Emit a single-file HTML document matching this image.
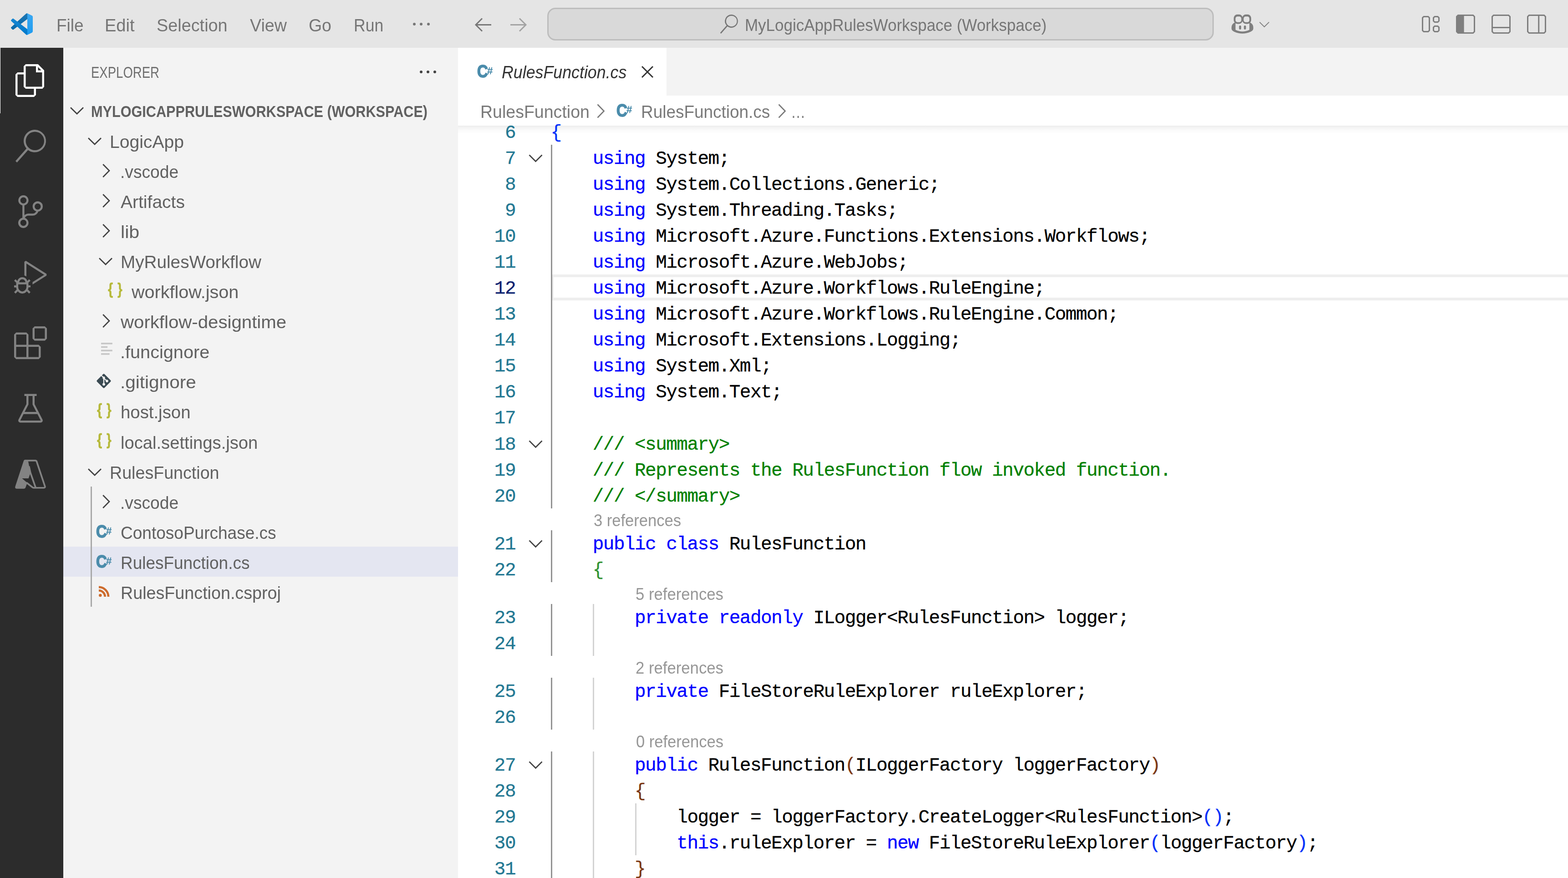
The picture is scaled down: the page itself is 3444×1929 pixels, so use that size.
<!DOCTYPE html>
<html lang="en"><head><meta charset="utf-8"><title>RulesFunction.cs - MyLogicAppRulesWorkspace (Workspace)</title><style>
html,body{margin:0;padding:0;width:3444px;height:1929px}
body{width:3444px;height:1929px;overflow:hidden;position:relative;background:#fff;font-family:'Liberation Sans', sans-serif}
#app{position:absolute;left:0;top:0;width:3444px;height:1929px;overflow:hidden}
.t{position:absolute;line-height:1;white-space:pre;transform-origin:0 0;font-family:'Liberation Sans', sans-serif}
.c{position:absolute;line-height:1;white-space:pre;font-family:'Liberation Mono', monospace;font-size:41px;letter-spacing:-1.5240px;color:#000;-webkit-text-stroke:0.3px currentColor}
svg{overflow:visible}
</style></head><body><div id="app">
<div style="position:absolute;left:0px;top:0px;width:3444px;height:105px;background:#e5e5e5;"></div>
<div style="position:absolute;left:0px;top:105px;width:139px;height:1824px;background:#2c2c2c;"></div>
<div style="position:absolute;left:0px;top:105px;width:1px;height:144px;background:#ffffff;"></div>
<div style="position:absolute;left:139px;top:105px;width:867px;height:1824px;background:#f3f3f3;"></div>
<div style="position:absolute;left:1006px;top:105px;width:2438px;height:1824px;background:#ffffff;"></div>
<div style="position:absolute;left:1006px;top:105px;width:2438px;height:105px;background:#f3f3f3;"></div>
<div style="position:absolute;left:1006px;top:105px;width:458px;height:105px;background:#ffffff;"></div>
<div style="position:absolute;left:1006px;top:276px;width:2438px;height:18px;background:linear-gradient(to bottom, rgba(0,0,0,0.07), rgba(0,0,0,0.045) 25%, rgba(0,0,0,0.02) 55%, rgba(0,0,0,0));"></div>
<svg style="position:absolute;left:24px;top:29px" width="48" height="48" viewBox="0 0 100 100" ><defs><mask id="vm" maskUnits="userSpaceOnUse" x="0" y="0" width="100" height="100"><path fill-rule="evenodd" clip-rule="evenodd" d="M70.9119 99.3171C72.4869 99.9307 74.2828 99.8914 75.8725 99.1264L96.4608 89.2197C98.6242 88.1787 100 85.9892 100 83.5872V16.4133C100 14.0113 98.6243 11.8218 96.4609 10.7808L75.8725 0.873756C73.7862 -0.130129 71.3446 0.11576 69.5135 1.44695C69.252 1.63711 69.0028 1.84943 68.769 2.08341L29.3551 38.0415L12.1872 25.0096C10.589 23.7965 8.35363 23.8959 6.86933 25.2461L1.36303 30.2549C-0.452552 31.9064 -0.454633 34.7627 1.35853 36.417L16.2471 50.0001L1.35853 63.5832C-0.454633 65.2374 -0.452552 68.0938 1.36303 69.7453L6.86933 74.7541C8.35363 76.1043 10.589 76.2037 12.1872 74.9905L29.3551 61.9587L68.769 97.9167C69.3925 98.5406 70.1246 99.0104 70.9119 99.3171ZM75.0152 27.2989L45.1091 50.0001L75.0152 72.7012V27.2989Z" fill="white"/></mask>
<linearGradient id="vg" x1="50" y1="0" x2="50" y2="100" gradientUnits="userSpaceOnUse"><stop stop-color="#fff" stop-opacity="0.12"/><stop offset="1" stop-color="#fff" stop-opacity="0"/></linearGradient></defs>
<g mask="url(#vm)"><path d="M96.4614 10.7962L75.8569 0.875542C73.4719 -0.272773 70.6217 0.211611 68.75 2.08333L1.29858 63.5832C-0.515693 65.2373 -0.513607 68.0937 1.30308 69.7452L6.81272 74.754C8.29793 76.1042 10.5347 76.2036 12.1338 74.9905L93.3609 13.3699C96.086 11.3026 100 13.2462 100 16.6667V16.4275C100 14.0265 98.6246 11.8378 96.4614 10.7962Z" fill="#0065A9"/>
<path d="M96.4614 89.2038L75.8569 99.1245C73.4719 100.273 70.6217 99.7884 68.75 97.9167L1.29858 36.4169C-0.515693 34.7627 -0.513607 31.9063 1.30308 30.2548L6.81272 25.246C8.29793 23.8958 10.5347 23.7964 12.1338 25.0095L93.3609 86.6301C96.086 88.6974 100 86.7538 100 83.3334V83.5726C100 85.9735 98.6246 88.1622 96.4614 89.2038Z" fill="#007ACC"/>
<path d="M75.8578 99.1263C73.4721 100.274 70.6219 99.7885 68.75 97.9166C71.0564 100.223 75 98.5895 75 95.3278V4.67213C75 1.41039 71.0564 -0.223106 68.75 2.08329C70.6219 0.211402 73.4721 -0.273666 75.8578 0.873633L96.4587 10.7807C98.6234 11.8217 100 14.0112 100 16.4132V83.5871C100 85.9891 98.6234 88.1786 96.4586 89.2196L75.8578 99.1263Z" fill="#1F9CF0"/>
<path fill-rule="evenodd" clip-rule="evenodd" d="M70.8511 99.3171C72.4261 99.9306 74.2221 99.8913 75.8117 99.1264L96.4 89.2197C98.5634 88.1787 99.9392 85.9892 99.9392 83.5871V16.4133C99.9392 14.0112 98.5635 11.8217 96.4001 10.7807L75.8117 0.873695C73.7255 -0.13019 71.2838 0.115699 69.4527 1.44688C69.1912 1.63705 68.942 1.84937 68.7082 2.08335L29.2943 38.0414L12.1264 25.0096C10.5283 23.7964 8.29285 23.8959 6.80855 25.246L1.30225 30.2548C-0.513334 31.9064 -0.515415 34.7627 1.29775 36.4169L16.1863 50L1.29775 63.5832C-0.515415 65.2374 -0.513334 68.0937 1.30225 69.7452L6.80855 74.754C8.29285 76.1042 10.5283 76.2036 12.1264 74.9905L29.2943 61.9586L68.7082 97.9167C69.3317 98.5405 70.0638 99.0104 70.8511 99.3171ZM74.9544 27.2989L45.0483 50L74.9544 72.7012V27.2989Z" fill="url(#vg)"/></g></svg>
<div class="t" style="left:123.66px;top:35.50px;font-size:39px;color:#767676;transform:scaleX(0.9483)">File</div>
<div class="t" style="left:230.07px;top:35.50px;font-size:39px;color:#767676;transform:scaleX(0.9750)">Edit</div>
<div class="t" style="left:343.56px;top:35.50px;font-size:39px;color:#767676;transform:scaleX(0.9699)">Selection</div>
<div class="t" style="left:549.00px;top:35.50px;font-size:39px;color:#767676;transform:scaleX(0.9643)">View</div>
<div class="t" style="left:678.08px;top:35.50px;font-size:39px;color:#767676;transform:scaleX(0.9592)">Go</div>
<div class="t" style="left:777.47px;top:35.50px;font-size:39px;color:#767676;transform:scaleX(0.9106)">Run</div>
<div style="position:absolute;left:906.5px;top:50px;width:6px;height:6px;border-radius:50%;background:#767676"></div>
<div style="position:absolute;left:922px;top:50px;width:6px;height:6px;border-radius:50%;background:#767676"></div>
<div style="position:absolute;left:937.5px;top:50px;width:6px;height:6px;border-radius:50%;background:#767676"></div>
<svg style="position:absolute;left:1043px;top:38.5px" width="36" height="31" viewBox="0 0 36 31"><path d="M16 1.5 L2 15.5 L16 29.5 M2.5 15.5 H36" fill="none" stroke="#777777" stroke-width="3" stroke-linejoin="miter"/></svg>
<svg style="position:absolute;left:1121px;top:38.5px" width="36" height="31" viewBox="0 0 36 31"><path d="M20 1.5 L34 15.5 L20 29.5 M33.5 15.5 H0" fill="none" stroke="#a3a3a3" stroke-width="3" stroke-linejoin="miter"/></svg>
<div style="position:absolute;left:1202px;top:17px;width:1464px;height:72px;box-sizing:border-box;border:3px solid #bdbdbd;border-radius:18px;background:#d9d9d9"></div>
<svg style="position:absolute;left:1579.5px;top:32.2px" width="42" height="42" viewBox="0 0 24 24" fill="#767676" ><path d="M15.25 0a8.25 8.25 0 0 0-6.18 13.72L1 22.88l1.12 1.12 8.05-9.12A8.251 8.251 0 1 0 15.25.01V0zm0 15a6.75 6.75 0 1 1 0-13.5 6.75 6.75 0 0 1 0 13.5z"/></svg>
<div class="t" style="left:1635.99px;top:37.70px;font-size:36px;color:#767676;transform:scaleX(0.9706)">MyLogicAppRulesWorkspace (Workspace)</div>
<svg style="position:absolute;left:2690px;top:20px" width="110" height="65" viewBox="0 0 110 65"><path d="M21 30 C16.5 32.5 14.9 36.5 14.9 41.5 C14.9 45.5 16.5 47.3 20 49.2 C27 52.6 33 53.8 38.9 53.8 C44.7 53.8 50.7 52.6 57.7 49.2 C61.2 47.3 62.8 45.5 62.8 41.5 C62.8 36.5 61.2 32.5 56.7 30 Z" fill="#7f7f7f"/><path d="M23.7 26 H54.2 V45.4 C49 47.9 44 49.2 38.9 49.2 C33.9 49.2 28.9 47.9 23.7 45.4 Z" fill="#e5e5e5"/><rect x="19.8" y="11.8" width="19.6" height="20.7" rx="7.8" ry="8.2" fill="#7f7f7f"/><rect x="38.5" y="11.8" width="19.6" height="20.7" rx="7.8" ry="8.2" fill="#7f7f7f"/><rect x="23.7" y="16.2" width="12.7" height="12.6" rx="4.6" fill="#e5e5e5"/><rect x="41.6" y="16.2" width="12.6" height="12.6" rx="4.6" fill="#e5e5e5"/><rect x="31.5" y="36" width="4.6" height="8.9" rx="2.3" fill="#7f7f7f"/><rect x="42.1" y="36" width="4.6" height="8.9" rx="2.3" fill="#7f7f7f"/><path d="M76.6 28.6 L87 39 L97.4 28.6" fill="none" stroke="#7f7f7f" stroke-width="1.8"/></svg>
<svg style="position:absolute;left:3121px;top:30px" width="280" height="46" viewBox="3121 30 280 46"><g fill="none" stroke="#7f7f7f" stroke-width="3" stroke-linejoin="miter"><path d="M3127.1 36.5 H3136.9 L3139.5 39.1 V66.9 L3136.9 69.5 H3127.1 L3124.5 66.9 V39.1 Z"/><path d="M3151.1 36.5 H3157.9 L3160.5 39.1 V45.9 L3157.9 48.5 H3151.1 L3148.5 45.9 V39.1 Z"/><path d="M3151.1 57.5 H3157.9 L3160.5 60.1 V66.9 L3157.9 69.5 H3151.1 L3148.5 66.9 V60.1 Z"/><path d="M3202.5 33.5 H3235.5 L3238.5 36.5 V69.5 L3235.5 72.5 H3202.5 L3199.5 69.5 V36.5 Z"/><path d="M3280.5 33.5 H3313.5 L3316.5 36.5 V69.5 L3313.5 72.5 H3280.5 L3277.5 69.5 V36.5 Z"/><path d="M3277.5 60.5 H3316.5"/><path d="M3358.5 33.5 H3391.5 L3394.5 36.5 V69.5 L3391.5 72.5 H3358.5 L3355.5 69.5 V36.5 Z"/><path d="M3379.7 33.5 V72.5"/></g><path d="M3201 33.5 H3215.6 V72.5 H3201 L3198.5 70 V36 Z" fill="#7f7f7f"/></svg>
<svg style="position:absolute;left:31px;top:141px" width="72" height="72" viewBox="0 0 24 24" fill="#ffffff" ><path d="M17.5 0h-9L7 1.5V6H2.5L1 7.5v15.07L2.5 24h12.07L16 22.57V18h4.7l1.3-1.43V4.5L17.5 0zm0 2.12l2.38 2.38H17.5V2.12zm-3 20.38h-12v-15H7v9.07L8.5 18h6v4.5zm6-6h-12v-15H16V6h4.5v10.5z"/></svg>
<svg style="position:absolute;left:31px;top:285px" width="72" height="72" viewBox="0 0 24 24" fill="#838383" ><path d="M15.25 0a8.25 8.25 0 0 0-6.18 13.72L1 22.88l1.12 1.12 8.05-9.12A8.251 8.251 0 1 0 15.25.01V0zm0 15a6.75 6.75 0 1 1 0-13.5 6.75 6.75 0 0 1 0 13.5z"/></svg>
<svg style="position:absolute;left:31px;top:429px" width="72" height="72" viewBox="0 0 24 24" fill="#838383" ><path d="M21.007 8.222A3.738 3.738 0 0 0 15.045 5.2a3.737 3.737 0 0 0 1.156 6.583 2.988 2.988 0 0 1-2.668 1.67h-2.99a4.456 4.456 0 0 0-2.989 1.165V7.4a3.737 3.737 0 1 0-1.494 0v9.117a3.776 3.776 0 1 0 1.816.099 2.99 2.99 0 0 1 2.668-1.667h2.99a4.484 4.484 0 0 0 4.223-3.039 3.736 3.736 0 0 0 3.25-3.687zM4.565 3.738a2.242 2.242 0 1 1 4.484 0 2.242 2.242 0 0 1-4.484 0zm4.484 16.441a2.242 2.242 0 1 1-4.484 0 2.242 2.242 0 0 1 4.484 0zm8.221-9.715a2.242 2.242 0 1 1 0-4.485 2.242 2.242 0 0 1 0 4.485z"/></svg>
<svg style="position:absolute;left:31px;top:573px" width="72" height="72" viewBox="0 0 24 24" fill="#838383" ><path d="M10.94 13.5l-1.32 1.32a3.73 3.73 0 0 0-7.24 0L1.06 13.5 0 14.56l1.72 1.72-.22.22V18H0v1.5h1.5v.08c.077.489.214.966.41 1.42L0 22.94 1.06 24l1.65-1.65A4.308 4.308 0 0 0 6 24a4.31 4.31 0 0 0 3.29-1.65L10.94 24 12 22.94 10.09 21c.198-.464.336-.951.41-1.45v-.1H12V18h-1.5v-1.5l-.22-.22L12 14.56l-1.06-1.06zM6 13.5a2.25 2.25 0 0 1 2.25 2.25h-4.5A2.25 2.25 0 0 1 6 13.5zm3 6a3.33 3.33 0 0 1-3 3 3.33 3.33 0 0 1-3-3v-2.25h6v2.25zm14.76-9.9v1.26L13.5 17.37V15.6l8.5-5.37L9 2v9.46a5.07 5.07 0 0 0-1.5-.72V.63L8.64 0l15.12 9.6z"/></svg>
<svg style="position:absolute;left:31px;top:717px" width="72" height="72" viewBox="0 0 24 24" fill="#838383" ><path d="M13.5 1.5L15 0h7.5L24 1.5V9l-1.5 1.5H15L13.5 9V1.5zm1.5 0V9h7.5V1.5H15zM0 15V6l1.5-1.5H9L10.5 6v7.5H18l1.5 1.5v7.5L18 24H1.5L0 22.5V15zm9-1.5V6H1.5v7.5H9zM9 15H1.5v7.5H9V15zm1.5 7.5H18V15h-7.5v7.5z"/></svg>
<svg style="position:absolute;left:31px;top:861px" width="72" height="72" viewBox="0 0 16 16" fill="#838383" ><path d="M13.893 13.558L10 6.006v-4h1v-1H9.994V1l-.456.005H5V2h1v3.952l-3.894 7.609A1 1 0 0 0 3 15h10a1 1 0 0 0 .893-1.442zM7 6.194V2h2v4.194l.11.213L10.86 9.8H5.14l1.75-3.393.11-.213zM3 14l1.6-3.15h6.8L13 14H3z"/></svg>
<svg style="position:absolute;left:20px;top:995px" width="100" height="90" viewBox="0 0 100 90"><path d="M35.25 15.10 L41.30 15.10 L46.91 43.98 L42.67 56.02 L28.38 56.02 L39.93 65.63 L36.18 75.98 Q35.25 78.73 32.13 78.73 L16.97 78.73 Q12.16 78.73 13.60 73.61 L31.69 18.40 Q32.75 15.10 35.25 15.10 Z" fill="#838383"/><path d="M39.93 16.97 L57.70 16.97 Q59.89 16.97 60.64 19.34 L78.73 73.49 Q79.54 76.73 76.11 76.73 L54.27 76.73 Q52.71 76.73 51.15 75.48 L38.05 65.19" fill="none" stroke="#838383" stroke-width="3.7" stroke-linejoin="round"/><path d="M43.67 29.32 L46.91 43.98 L58.33 76.42" fill="none" stroke="#838383" stroke-width="3.7" stroke-linejoin="round"/></svg>
<div class="t" style="left:200.01px;top:142.40px;font-size:34.5px;color:#6f6f6f;transform:scaleX(0.7978)">EXPLORER</div>
<div style="position:absolute;left:922px;top:154.5px;width:6px;height:6px;border-radius:50%;background:#424242"></div>
<div style="position:absolute;left:937px;top:154.5px;width:6px;height:6px;border-radius:50%;background:#424242"></div>
<div style="position:absolute;left:952px;top:154.5px;width:6px;height:6px;border-radius:50%;background:#424242"></div>
<svg style="position:absolute;left:144.5px;top:218.4px" width="48" height="48" viewBox="0 0 48 48"><path d="M10 18.2 L24 32 L38 18.2" fill="none" stroke="#424242" stroke-width="2.7"/></svg>
<div class="t" style="left:200.05px;top:227.00px;font-size:35px;color:#616161;transform:scaleX(0.8751);font-weight:700">MYLOGICAPPRULESWORKSPACE (WORKSPACE)</div>
<div style="position:absolute;left:139px;top:1201px;width:867px;height:66px;background:#e4e6f1;"></div>
<div style="position:absolute;left:199px;top:1069px;width:3px;height:264px;background:#a9a9a9;"></div>
<svg style="position:absolute;left:183.6px;top:284.8px" width="48" height="48" viewBox="0 0 48 48"><path d="M10 18.2 L24 32 L38 18.2" fill="none" stroke="#424242" stroke-width="2.7"/></svg>
<div class="t" style="left:241.20px;top:291.80px;font-size:39px;color:#616161;transform:scaleX(1.0019)">LogicApp</div>
<svg style="position:absolute;left:207.6px;top:350.87px" width="48" height="48" viewBox="0 0 48 48"><path d="M18.2 10 L32 24 L18.2 38" fill="none" stroke="#424242" stroke-width="2.7"/></svg>
<div class="t" style="left:264.20px;top:357.87px;font-size:39px;color:#616161;transform:scaleX(0.9534)">.vscode</div>
<svg style="position:absolute;left:207.6px;top:416.94px" width="48" height="48" viewBox="0 0 48 48"><path d="M18.2 10 L32 24 L18.2 38" fill="none" stroke="#424242" stroke-width="2.7"/></svg>
<div class="t" style="left:265.20px;top:423.94px;font-size:39px;color:#616161;transform:scaleX(1.0007)">Artifacts</div>
<svg style="position:absolute;left:207.6px;top:483.01px" width="48" height="48" viewBox="0 0 48 48"><path d="M18.2 10 L32 24 L18.2 38" fill="none" stroke="#424242" stroke-width="2.7"/></svg>
<div class="t" style="left:265.20px;top:490.01px;font-size:39px;color:#616161;transform:scaleX(1.0579)">lib</div>
<svg style="position:absolute;left:207.6px;top:549.0799999999999px" width="48" height="48" viewBox="0 0 48 48"><path d="M10 18.2 L24 32 L38 18.2" fill="none" stroke="#424242" stroke-width="2.7"/></svg>
<div class="t" style="left:265.20px;top:556.08px;font-size:39px;color:#616161;transform:scaleX(0.9920)">MyRulesWorkflow</div>
<div class="t" style="left:236.80px;top:618.40px;font-size:40px;color:#b6b93a;font-weight:700;transform:scale(0.7267,0.8632);-webkit-text-stroke:0.6px currentColor">{</div>
<div class="t" style="left:257.50px;top:618.40px;font-size:40px;color:#b6b93a;font-weight:700;transform:scale(0.6812,0.8632);-webkit-text-stroke:0.6px currentColor">}</div>
<div class="t" style="left:289.20px;top:622.15px;font-size:39px;color:#616161;transform:scaleX(1.0143)">workflow.json</div>
<svg style="position:absolute;left:207.6px;top:681.22px" width="48" height="48" viewBox="0 0 48 48"><path d="M18.2 10 L32 24 L18.2 38" fill="none" stroke="#424242" stroke-width="2.7"/></svg>
<div class="t" style="left:265.20px;top:688.22px;font-size:39px;color:#616161;transform:scaleX(1.0307)">workflow-designtime</div>
<svg style="position:absolute;left:221.80px;top:752.99px" width="26" height="28" viewBox="0 0 26 28"><g fill="#c6c6c6"><rect x="0" y="0" width="24.8" height="3.5"/><rect x="0" y="7.7" width="14.1" height="3.5"/><rect x="0" y="15.4" width="24.8" height="3.5"/><rect x="0" y="23" width="18.6" height="3.5"/></g></svg>
<div class="t" style="left:264.20px;top:754.29px;font-size:39px;color:#616161;transform:scaleX(1.0168)">.funcignore</div>
<svg style="position:absolute;left:210.40px;top:818.56px" width="36" height="36" viewBox="-18 -18 36 36"><rect x="-11.7" y="-11.7" width="23.4" height="23.4" rx="2.2" transform="rotate(45)" fill="#3a4a52"/><g stroke="#f3f3f3" fill="none"><path d="M-5.9 -12.5 L0 -7" stroke-width="2.1"/><path d="M0 -7 V7.3" stroke-width="2.3"/><path d="M0.5 -5.8 L6.9 0.1" stroke-width="2.2"/></g><circle cx="0" cy="-7" r="2.7" fill="#f3f3f3"/><circle cx="0" cy="7.3" r="2.85" fill="#f3f3f3"/><circle cx="6.9" cy="0.1" r="2.85" fill="#f3f3f3"/></svg>
<div class="t" style="left:264.20px;top:820.36px;font-size:39px;color:#616161;transform:scaleX(1.0390)">.gitignore</div>
<div class="t" style="left:212.80px;top:882.68px;font-size:40px;color:#b6b93a;font-weight:700;transform:scale(0.7267,0.8632);-webkit-text-stroke:0.6px currentColor">{</div>
<div class="t" style="left:233.50px;top:882.68px;font-size:40px;color:#b6b93a;font-weight:700;transform:scale(0.6813,0.8632);-webkit-text-stroke:0.6px currentColor">}</div>
<div class="t" style="left:265.20px;top:886.43px;font-size:39px;color:#616161;transform:scaleX(0.9831)">host.json</div>
<div class="t" style="left:212.80px;top:948.75px;font-size:40px;color:#b6b93a;font-weight:700;transform:scale(0.7267,0.8632);-webkit-text-stroke:0.6px currentColor">{</div>
<div class="t" style="left:233.50px;top:948.75px;font-size:40px;color:#b6b93a;font-weight:700;transform:scale(0.6813,0.8632);-webkit-text-stroke:0.6px currentColor">}</div>
<div class="t" style="left:265.20px;top:952.50px;font-size:39px;color:#616161;transform:scaleX(0.9788)">local.settings.json</div>
<svg style="position:absolute;left:183.6px;top:1011.5699999999999px" width="48" height="48" viewBox="0 0 48 48"><path d="M10 18.2 L24 32 L38 18.2" fill="none" stroke="#424242" stroke-width="2.7"/></svg>
<div class="t" style="left:241.20px;top:1018.57px;font-size:39px;color:#616161;transform:scaleX(0.9648)">RulesFunction</div>
<svg style="position:absolute;left:207.6px;top:1077.6399999999999px" width="48" height="48" viewBox="0 0 48 48"><path d="M18.2 10 L32 24 L18.2 38" fill="none" stroke="#424242" stroke-width="2.7"/></svg>
<div class="t" style="left:264.20px;top:1084.64px;font-size:39px;color:#616161;transform:scaleX(0.9534)">.vscode</div>
<div class="t" style="left:211.13px;top:1148.08px;font-size:40px;color:#4b8cab;font-weight:700;transform:scale(0.8232,0.9850);-webkit-text-stroke:1.8px currentColor">C</div>
<div class="t" style="left:233.00px;top:1154.88px;font-size:40px;color:#4b8cab;font-weight:700;transform:scale(0.5545,0.5714);-webkit-text-stroke:0.5px currentColor">#</div>
<div class="t" style="left:265.20px;top:1150.71px;font-size:39px;color:#616161;transform:scaleX(0.9493)">ContosoPurchase.cs</div>
<div class="t" style="left:211.13px;top:1214.15px;font-size:40px;color:#4b8cab;font-weight:700;transform:scale(0.8232,0.9850);-webkit-text-stroke:1.8px currentColor">C</div>
<div class="t" style="left:233.00px;top:1220.95px;font-size:40px;color:#4b8cab;font-weight:700;transform:scale(0.5545,0.5714);-webkit-text-stroke:0.5px currentColor">#</div>
<div class="t" style="left:265.20px;top:1216.78px;font-size:39px;color:#616161;transform:scaleX(0.9473)">RulesFunction.cs</div>
<svg style="position:absolute;left:215.80px;top:1286.45px" width="26" height="26" viewBox="-1 -25 26 26"><circle cx="3.24" cy="-3.05" r="3.25" fill="#cd6b2c"/><path d="M0 -13.6 A13.6 13.6 0 0 1 13.6 0" fill="none" stroke="#cd6b2c" stroke-width="4.8"/><path d="M0 -21.05 A21.05 21.05 0 0 1 21.05 0" fill="none" stroke="#cd6b2c" stroke-width="4.7"/></svg>
<div class="t" style="left:265.20px;top:1282.85px;font-size:39px;color:#616161;transform:scaleX(0.9663)">RulesFunction.csproj</div>
<div class="t" style="left:1048.43px;top:137.27px;font-size:40px;color:#4b8cab;font-weight:700;transform:scale(0.8232,0.9850);-webkit-text-stroke:1.8px currentColor">C</div>
<div class="t" style="left:1070.30px;top:144.07px;font-size:40px;color:#4b8cab;font-weight:700;transform:scale(0.5545,0.5714);-webkit-text-stroke:0.5px currentColor">#</div>
<div class="t" style="left:1102.48px;top:139.00px;font-size:39px;color:#333333;transform:scaleX(0.9172);font-style:italic">RulesFunction.cs</div>
<svg style="position:absolute;left:1406px;top:142px" width="32" height="32" viewBox="0 0 32 32"><path d="M4 4 L28 28 M28 4 L4 28" fill="none" stroke="#333333" stroke-width="3"/></svg>
<div class="t" style="left:1054.61px;top:226.00px;font-size:39px;color:#7a7a7a;transform:scaleX(0.9623)">RulesFunction</div>
<svg style="position:absolute;left:1310px;top:228px" width="20" height="32" viewBox="0 0 20 32"><path d="M2.5 1.5 L16.5 16 L2.5 30.5" fill="none" stroke="#7a7a7a" stroke-width="2.7"/></svg>
<div class="t" style="left:1354.43px;top:222.57px;font-size:40px;color:#4b8cab;font-weight:700;transform:scale(0.8232,0.9850);-webkit-text-stroke:1.8px currentColor">C</div>
<div class="t" style="left:1376.30px;top:229.37px;font-size:40px;color:#4b8cab;font-weight:700;transform:scale(0.5545,0.5714);-webkit-text-stroke:0.5px currentColor">#</div>
<div class="t" style="left:1407.76px;top:226.00px;font-size:39px;color:#7a7a7a;transform:scaleX(0.9471)">RulesFunction.cs</div>
<svg style="position:absolute;left:1708px;top:228px" width="20" height="32" viewBox="0 0 20 32"><path d="M2.5 1.5 L16.5 16 L2.5 30.5" fill="none" stroke="#7a7a7a" stroke-width="2.7"/></svg>
<div class="t" style="left:1737.48px;top:226.00px;font-size:39px;color:#7a7a7a;transform:scaleX(0.8241)">…</div>
<div style="position:absolute;left:1210px;top:603px;width:2234px;height:57px;background:transparent;box-sizing:border-box;border:6px solid #eeeeee;border-right:0"></div>
<div style="position:absolute;left:1210px;top:318px;width:3px;height:799px;background:#939393;"></div>
<div style="position:absolute;left:1210px;top:1165px;width:3px;height:114px;background:#939393;"></div>
<div style="position:absolute;left:1210px;top:1327px;width:3px;height:114px;background:#939393;"></div>
<div style="position:absolute;left:1210px;top:1489px;width:3px;height:114px;background:#939393;"></div>
<div style="position:absolute;left:1210px;top:1651px;width:3px;height:278px;background:#939393;"></div>
<div style="position:absolute;left:1302px;top:1327px;width:3px;height:114px;background:#d3d3d3;"></div>
<div style="position:absolute;left:1302px;top:1489px;width:3px;height:114px;background:#d3d3d3;"></div>
<div style="position:absolute;left:1302px;top:1651px;width:3px;height:278px;background:#d3d3d3;"></div>
<div style="position:absolute;left:1395px;top:1765px;width:3px;height:114px;background:#d3d3d3;"></div>
<svg style="position:absolute;left:1160.3px;top:338.00px" width="33" height="20" viewBox="0 0 33 20"><path d="M2.5 2.5 L16.5 16.5 L30.5 2.5" fill="none" stroke="#424242" stroke-width="2.7"/></svg>
<svg style="position:absolute;left:1160.3px;top:966.00px" width="33" height="20" viewBox="0 0 33 20"><path d="M2.5 2.5 L16.5 16.5 L30.5 2.5" fill="none" stroke="#424242" stroke-width="2.7"/></svg>
<svg style="position:absolute;left:1160.3px;top:1185.00px" width="33" height="20" viewBox="0 0 33 20"><path d="M2.5 2.5 L16.5 16.5 L30.5 2.5" fill="none" stroke="#424242" stroke-width="2.7"/></svg>
<svg style="position:absolute;left:1160.3px;top:1671.00px" width="33" height="20" viewBox="0 0 33 20"><path d="M2.5 2.5 L16.5 16.5 L30.5 2.5" fill="none" stroke="#424242" stroke-width="2.7"/></svg>
<div class="t" style="left:1304.39px;top:1125.00px;font-size:37px;color:#979797;transform:scaleX(0.9333)">3 references</div>
<div class="t" style="left:1395.76px;top:1287.00px;font-size:37px;color:#979797;transform:scaleX(0.9379)">5 references</div>
<div class="t" style="left:1395.76px;top:1449.00px;font-size:37px;color:#979797;transform:scaleX(0.9379)">2 references</div>
<div class="t" style="left:1396.71px;top:1611.00px;font-size:37px;color:#979797;transform:scaleX(0.9333)">0 references</div>
<div class="c" style="left:1108.92px;top:272.00px;color:#237893">6</div>
<div class="c" style="left:1209.40px;top:272.00px"><span style="color:#0431fa">{</span></div>
<div class="c" style="left:1108.92px;top:329.00px;color:#237893">7</div>
<div class="c" style="left:1209.40px;top:329.00px">    <span style="color:#0000ff">using</span> System;</div>
<div class="c" style="left:1108.92px;top:386.00px;color:#237893">8</div>
<div class="c" style="left:1209.40px;top:386.00px">    <span style="color:#0000ff">using</span> System.Collections.Generic;</div>
<div class="c" style="left:1108.92px;top:443.00px;color:#237893">9</div>
<div class="c" style="left:1209.40px;top:443.00px">    <span style="color:#0000ff">using</span> System.Threading.Tasks;</div>
<div class="c" style="left:1085.84px;top:500.00px;color:#237893">10</div>
<div class="c" style="left:1209.40px;top:500.00px">    <span style="color:#0000ff">using</span> Microsoft.Azure.Functions.Extensions.Workflows;</div>
<div class="c" style="left:1085.84px;top:557.00px;color:#237893">11</div>
<div class="c" style="left:1209.40px;top:557.00px">    <span style="color:#0000ff">using</span> Microsoft.Azure.WebJobs;</div>
<div class="c" style="left:1085.84px;top:614.00px;color:#0b216f">12</div>
<div class="c" style="left:1209.40px;top:614.00px">    <span style="color:#0000ff">using</span> Microsoft.Azure.Workflows.RuleEngine;</div>
<div class="c" style="left:1085.84px;top:671.00px;color:#237893">13</div>
<div class="c" style="left:1209.40px;top:671.00px">    <span style="color:#0000ff">using</span> Microsoft.Azure.Workflows.RuleEngine.Common;</div>
<div class="c" style="left:1085.84px;top:728.00px;color:#237893">14</div>
<div class="c" style="left:1209.40px;top:728.00px">    <span style="color:#0000ff">using</span> Microsoft.Extensions.Logging;</div>
<div class="c" style="left:1085.84px;top:785.00px;color:#237893">15</div>
<div class="c" style="left:1209.40px;top:785.00px">    <span style="color:#0000ff">using</span> System.Xml;</div>
<div class="c" style="left:1085.84px;top:842.00px;color:#237893">16</div>
<div class="c" style="left:1209.40px;top:842.00px">    <span style="color:#0000ff">using</span> System.Text;</div>
<div class="c" style="left:1085.84px;top:899.00px;color:#237893">17</div>
<div class="c" style="left:1085.84px;top:957.00px;color:#237893">18</div>
<div class="c" style="left:1209.40px;top:957.00px">    <span style="color:#008000">/// &lt;summary&gt;</span></div>
<div class="c" style="left:1085.84px;top:1014.00px;color:#237893">19</div>
<div class="c" style="left:1209.40px;top:1014.00px">    <span style="color:#008000">/// Represents the RulesFunction flow invoked function.</span></div>
<div class="c" style="left:1085.84px;top:1071.00px;color:#237893">20</div>
<div class="c" style="left:1209.40px;top:1071.00px">    <span style="color:#008000">/// &lt;/summary&gt;</span></div>
<div class="c" style="left:1085.84px;top:1176.00px;color:#237893">21</div>
<div class="c" style="left:1209.40px;top:1176.00px">    <span style="color:#0000ff">public</span> <span style="color:#0000ff">class</span> RulesFunction</div>
<div class="c" style="left:1085.84px;top:1233.00px;color:#237893">22</div>
<div class="c" style="left:1209.40px;top:1233.00px">    <span style="color:#319331">{</span></div>
<div class="c" style="left:1085.84px;top:1338.00px;color:#237893">23</div>
<div class="c" style="left:1209.40px;top:1338.00px">        <span style="color:#0000ff">private</span> <span style="color:#0000ff">readonly</span> ILogger&lt;RulesFunction&gt; logger;</div>
<div class="c" style="left:1085.84px;top:1395.00px;color:#237893">24</div>
<div class="c" style="left:1085.84px;top:1500.00px;color:#237893">25</div>
<div class="c" style="left:1209.40px;top:1500.00px">        <span style="color:#0000ff">private</span> FileStoreRuleExplorer ruleExplorer;</div>
<div class="c" style="left:1085.84px;top:1557.00px;color:#237893">26</div>
<div class="c" style="left:1085.84px;top:1662.00px;color:#237893">27</div>
<div class="c" style="left:1209.40px;top:1662.00px">        <span style="color:#0000ff">public</span> RulesFunction<span style="color:#7b3814">(</span>ILoggerFactory loggerFactory<span style="color:#7b3814">)</span></div>
<div class="c" style="left:1085.84px;top:1719.00px;color:#237893">28</div>
<div class="c" style="left:1209.40px;top:1719.00px">        <span style="color:#7b3814">{</span></div>
<div class="c" style="left:1085.84px;top:1776.00px;color:#237893">29</div>
<div class="c" style="left:1209.40px;top:1776.00px">            logger = loggerFactory.CreateLogger&lt;RulesFunction&gt;<span style="color:#0431fa">(</span><span style="color:#0431fa">)</span>;</div>
<div class="c" style="left:1085.84px;top:1833.00px;color:#237893">30</div>
<div class="c" style="left:1209.40px;top:1833.00px">            <span style="color:#0000ff">this</span>.ruleExplorer = <span style="color:#0000ff">new</span> FileStoreRuleExplorer<span style="color:#0431fa">(</span>loggerFactory<span style="color:#0431fa">)</span>;</div>
<div class="c" style="left:1085.84px;top:1890.00px;color:#237893">31</div>
<div class="c" style="left:1209.40px;top:1890.00px">        <span style="color:#7b3814">}</span></div>
</div></body></html>
